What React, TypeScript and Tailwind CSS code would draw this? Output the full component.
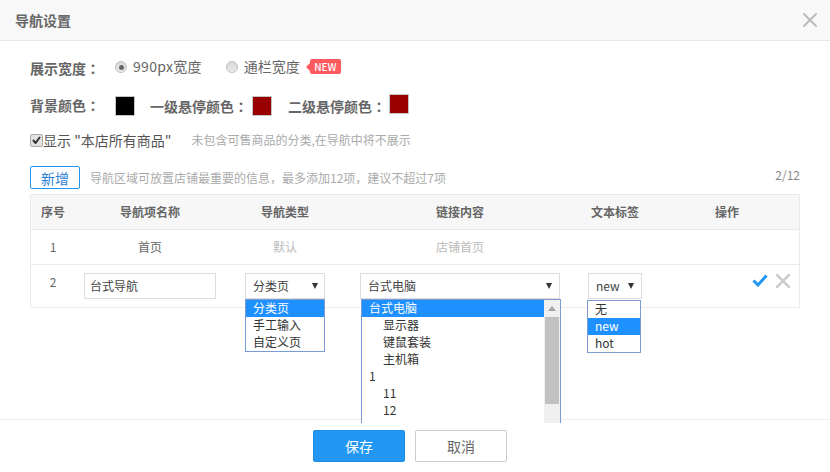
import { X } from "lucide-react";

const font = "font-['Noto_Sans_CJK_SC','Noto_Sans',sans-serif]";

const Colon = () => <span className="font-['Noto_Sans_CJK_TC',sans-serif]">：</span>;

const Swatch = ({ color, className = "" }: { color: string; className?: string }) => (
  <span className={`block w-[20px] h-[20px] border border-[#c4c4c4] ${color} ${className}`} />
);

const Caret = () => (
  <svg width="6" height="6" viewBox="0 0 6 6" className="shrink-0">
    <path d="M0 0h6L3 6z" fill="#333" />
  </svg>
);

const Radio = ({ checked }: { checked?: boolean }) => (
  <span className="flex items-center justify-center w-[12px] h-[12px] rounded-full border border-[#c0c0c0] bg-gradient-to-b from-[#d8d8d8] to-[#ececec] -translate-y-[1px]">
    {checked && <span className="block w-[5px] h-[5px] rounded-full bg-[#666]" />}
  </span>
);

const App = () => {
  return (
    <div className={`${font} relative flex flex-col w-[830px] h-[472px] bg-white text-[#666] overflow-hidden`}>
      <header className="flex items-center justify-between h-[41px] shrink-0 pl-[15px] pr-[8px] bg-[#f8f8f8] border-b border-[#e8e8e8]">
        <h1 className="text-[14px] font-bold text-[#666]">导航设置</h1>
        <X className="w-[24px] h-[24px] text-[#bbb]" strokeWidth={2} />
      </header>

      <main className="flex-1 px-[30px] pt-[17px]">
        <div className="flex items-center h-[20px] text-[14px]">
          <span className="w-[85px] font-bold"><span>展示宽度</span><Colon /></span>
          <Radio checked />
          <span className="ml-[6px] -translate-y-[2px] tracking-[0.3px]">990px宽度</span>
          <span className="ml-[24px]"><Radio /></span>
          <span className="ml-[6px] -translate-y-[2px]">通栏宽度</span>
          <span className="relative ml-[10px] -translate-y-[2px] flex items-center justify-center w-[31px] h-[15px] rounded-[2px] bg-[#ff5a5f] text-white text-[10px] font-medium">
            <span className="absolute left-[-4px] top-[4px] border-y-[4px] border-r-[4px] border-y-transparent border-r-[#ff5a5f]" />
            NEW
          </span>
        </div>

        <div className="flex items-center h-[20px] mt-[18px] text-[14px] font-bold">
          <span className="w-[85px] -translate-y-[1px]">背景颜色<Colon /></span>
          <Swatch color="bg-black" />
          <span className="ml-[15px] w-[102px]">一级悬停颜色<Colon /></span>
          <Swatch color="bg-[#990000]" />
          <span className="ml-[16px] w-[101px]">二级悬停颜色<Colon /></span>
          <Swatch color="bg-[#990000]" className="-translate-y-[2px]" />
        </div>

        <div className="flex items-center h-[20px] mt-[14px]">
          <span className="flex items-center justify-center w-[13px] h-[13px] rounded-[2px] border border-[#aaa] bg-[#e2e2e2]">
            <svg width="9" height="8" viewBox="0 0 9 8"><path d="M1 4l2.5 3L8 1" fill="none" stroke="#333" strokeWidth="2" /></svg>
          </span>
          <span className="text-[14px] text-[#555]">显示 "本店所有商品"</span>
          <span className="ml-[20px] text-[12px] text-[#aaa]">未包含可售商品的分类,在导航中将不展示</span>
        </div>

        <div className="flex items-center justify-between h-[23px] mt-[16px]">
          <div className="flex items-center">
            <button className="w-[50px] h-[23px] rounded-[2px] border border-[#2196f3] text-[14px] text-[#2b7fd6] leading-none">新增</button>
            <span className="ml-[10px] text-[12px] text-[#aaa]">导航区域可放置店铺最重要的信息，最多添加12项，建议不超过7项</span>
          </div>
          <span className="text-[12px] text-[#888] -translate-y-[3px]">2/12</span>
        </div>

        <div className="mt-[5px] border border-[#eaeaea] text-[12px]">
          <div className="grid grid-cols-[44px_150px_120px_230px_80px_144px] items-center h-[35px] bg-[#f7f7f7] border-b border-[#eaeaea] text-center font-bold">
            <span>序号</span>
            <span>导航项名称</span>
            <span>导航类型</span>
            <span>链接内容</span>
            <span>文本标签</span>
            <span>操作</span>
          </div>
          <div className="grid grid-cols-[44px_150px_120px_230px_80px_144px] items-center h-[35px] border-b border-[#eaeaea] text-center">
            <span>1</span>
            <span>首页</span>
            <span className="text-[#bbb]">默认</span>
            <span className="text-[#bbb]">店铺首页</span>
          </div>
          <div className="grid grid-cols-[44px_150px_120px_230px_80px_144px] h-[42px] text-center">
            <span className="pt-[8px]">2</span>
            <div className="pl-[9px] pt-[8px]">
              <div className="flex items-center w-[132px] h-[26px] px-[5px] border border-[#ddd] text-[#444]">台式导航</div>
            </div>
            <div className="pl-[20px] pt-[8px]">
              <div className="relative w-[80px]">
                <div className="flex items-center justify-between h-[26px] pl-[7px] pr-[6px] border border-[#ddd] text-[#444]">
                  分类页
                  <Caret />
                </div>
                <ul className="absolute z-10 left-0 top-[26px] w-[80px] h-[53px] border border-[#7b9bd4] bg-white text-left text-[#333] leading-[16px]">
                  <li className="pl-[7px] pb-[1px] bg-[#1e90ff] text-white">分类页</li>
                  <li className="pl-[7px] pb-[1px]">手工输入</li>
                  <li className="pl-[7px] pb-[1px]">自定义页</li>
                </ul>
              </div>
            </div>
            <div className="pl-[15px] pt-[8px]">
              <div className="relative w-[200px]">
                <div className="flex items-center justify-between h-[26px] pl-[7px] pr-[7px] border border-[#ddd] text-[#444]">
                  台式电脑
                  <Caret />
                </div>
                <div className="absolute z-10 left-[1px] top-[26px] flex w-[200px] h-[124px] border-x border-t border-[#7b9bd4] bg-white text-left text-[#333] leading-[16px]">
                  <ul className="flex-1">
                    <li className="pl-[7px] pb-[1px] bg-[#1e90ff] text-white">台式电脑</li>
                    <li className="pl-[21px] pb-[1px]">显示器</li>
                    <li className="pl-[21px] pb-[1px]">键鼠套装</li>
                    <li className="pl-[21px] pb-[1px]">主机箱</li>
                    <li className="pl-[7px] pb-[1px]">1</li>
                    <li className="pl-[21px] pb-[1px]">11</li>
                    <li className="pl-[21px] pb-[1px]">12</li>
                  </ul>
                  <div className="flex flex-col w-[16px] bg-[#f0f0f0] px-[1px]">
                    <div className="flex items-center justify-center h-[17px]">
                      <svg width="8" height="5" viewBox="0 0 8 5"><path d="M4 0l4 5H0z" fill="#a3a3a3" /></svg>
                    </div>
                    <div className="h-[87px] bg-[#c1c1c1]" />
                  </div>
                </div>
              </div>
            </div>
            <div className="pl-[13px] pt-[8px]">
              <div className="relative w-[54px]">
                <div className="flex items-center justify-between h-[26px] pl-[7px] pr-[7px] border border-[#ddd] text-[#444]">
                  new
                  <Caret />
                </div>
                <ul className="absolute z-10 left-[-1px] top-[27px] w-[54px] h-[53px] border border-[#7b9bd4] bg-white text-left text-[#333] leading-[16px]">
                  <li className="pl-[7px] pb-[1px]">无</li>
                  <li className="pl-[7px] pb-[1px] bg-[#1e90ff] text-white">new</li>
                  <li className="pl-[7px] pb-[1px]">hot</li>
                </ul>
              </div>
            </div>
            <div className="flex items-start justify-end gap-[3px] pr-[4px] pt-[4px]">
              <svg width="16" height="13" viewBox="0 0 16 13" className="mt-[5px]">
                <path d="M1.5 6.5l4.5 4.5L14.5 1.5" fill="none" stroke="#2196f3" strokeWidth="3" />
              </svg>
              <X className="w-[24px] h-[24px] text-[#ccc]" strokeWidth={2.5} />
            </div>
          </div>
        </div>
      </main>

      <footer className="flex items-start justify-center gap-[10px] h-[53px] shrink-0 pt-[10px] pr-[10px] border-t border-[#eeeeee]">
        <button className="w-[92px] h-[32px] rounded-[2px] border border-[#1b8ee8] bg-[#2196f3] text-[14px] text-white">保存</button>
        <button className="w-[92px] h-[32px] rounded-[2px] border border-[#ccc] bg-white text-[14px] text-[#666]">取消</button>
      </footer>
    </div>
  );
};

export default App;
